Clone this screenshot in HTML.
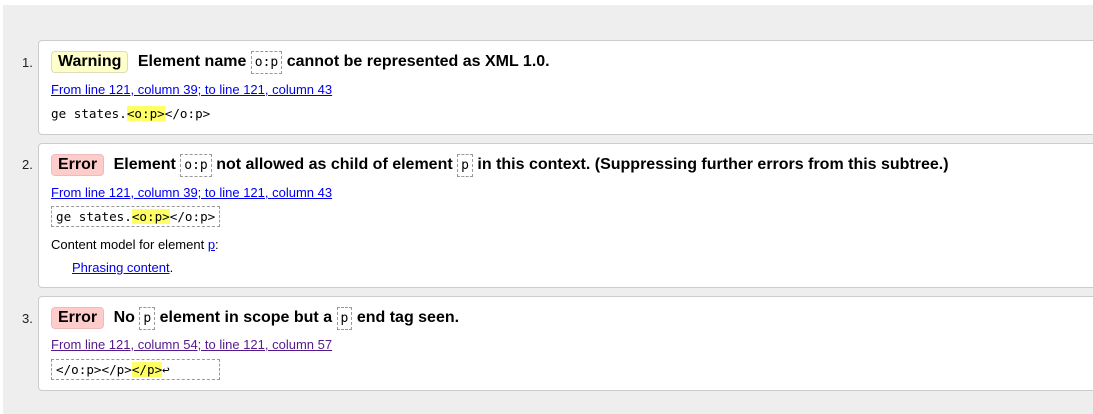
<!DOCTYPE html>
<html><head><style>
body{margin:0;width:1093px;height:414px;background:#fff;overflow:hidden;font-family:"Liberation Sans",Arial,sans-serif;}
.bg{position:absolute;left:3px;top:5px;right:0;bottom:0;background:#eee;}
.card{position:absolute;left:38px;width:1070px;background:#fff;border:1px solid #ccc;border-radius:4px;box-sizing:border-box;}
.num{position:absolute;left:22px;font-size:13px;color:#222;}
.t{position:absolute;left:12px;font-size:16px;font-weight:bold;color:#000;white-space:nowrap;}
.b{display:inline-block;padding:1px 6px;border-radius:4px;margin-right:5px;border:1px solid #ddd;}
.w{background:#ffc;border-color:#ddb;}
.e{background:#fcc;border-color:#ebb;}
.c{font-family:"DejaVu Sans Mono","Liberation Mono",monospace;font-weight:normal;font-size:13px;border:1px dashed #999;padding:3px 3px;}
.l{position:absolute;left:12px;font-size:13px;color:#00e;text-decoration:underline;white-space:nowrap;}
.code{position:absolute;left:12px;font-family:"DejaVu Sans Mono","Liberation Mono",monospace;font-size:12.6px;white-space:pre;color:#000;}
.d{border:1px dashed #999;padding:2px 4px;}
.h{background:#ff6;}
.s{position:absolute;font-size:13px;color:#000;white-space:nowrap;}
</style></head><body>
<div class="bg"></div>
<div class="num" style="top:55px">1.</div>
<div class="card" style="top:40px;height:95px">
 <div class="t" style="top:10px"><span class="b w">Warning</span> Element name <span class="c">o:p</span> cannot be represented as XML 1.0.</div>
 <div class="l" style="top:41px">From line 121, column 39; to line 121, column 43</div>
 <div class="code" style="top:65px">ge states.<span class="h">&lt;o:p&gt;</span>&lt;/o:p&gt;</div>
</div>
<div class="num" style="top:157px">2.</div>
<div class="card" style="top:143px;height:145px">
 <div class="t" style="top:10px"><span class="b e">Error</span> Element <span class="c">o:p</span> not allowed as child of element <span class="c">p</span> in this context. (Suppressing further errors from this subtree.)</div>
 <div class="l" style="top:41px">From line 121, column 39; to line 121, column 43</div>
 <div class="code" style="top:65px"><span class="d">ge states.<span class="h">&lt;o:p&gt;</span>&lt;/o:p&gt;</span></div>
 <div class="s" style="left:12px;top:93px">Content model for element <span style="color:#00e;text-decoration:underline">p</span>:</div>
 <div class="s" style="left:33px;top:116px"><span style="color:#00e;text-decoration:underline">Phrasing content</span>.</div>
</div>
<div class="num" style="top:311px">3.</div>
<div class="card" style="top:296px;height:95px">
 <div class="t" style="top:10px"><span class="b e">Error</span> No <span class="c">p</span> element in scope but a <span class="c">p</span> end tag seen.</div>
 <div class="l" style="top:40px;color:#551a8b">From line 121, column 54; to line 121, column 57</div>
 <div class="code" style="top:65px"><span class="d">&lt;/o:p&gt;&lt;/p&gt;<span class="h">&lt;/p&gt;</span>↩      </span></div>
</div>
</body></html>
